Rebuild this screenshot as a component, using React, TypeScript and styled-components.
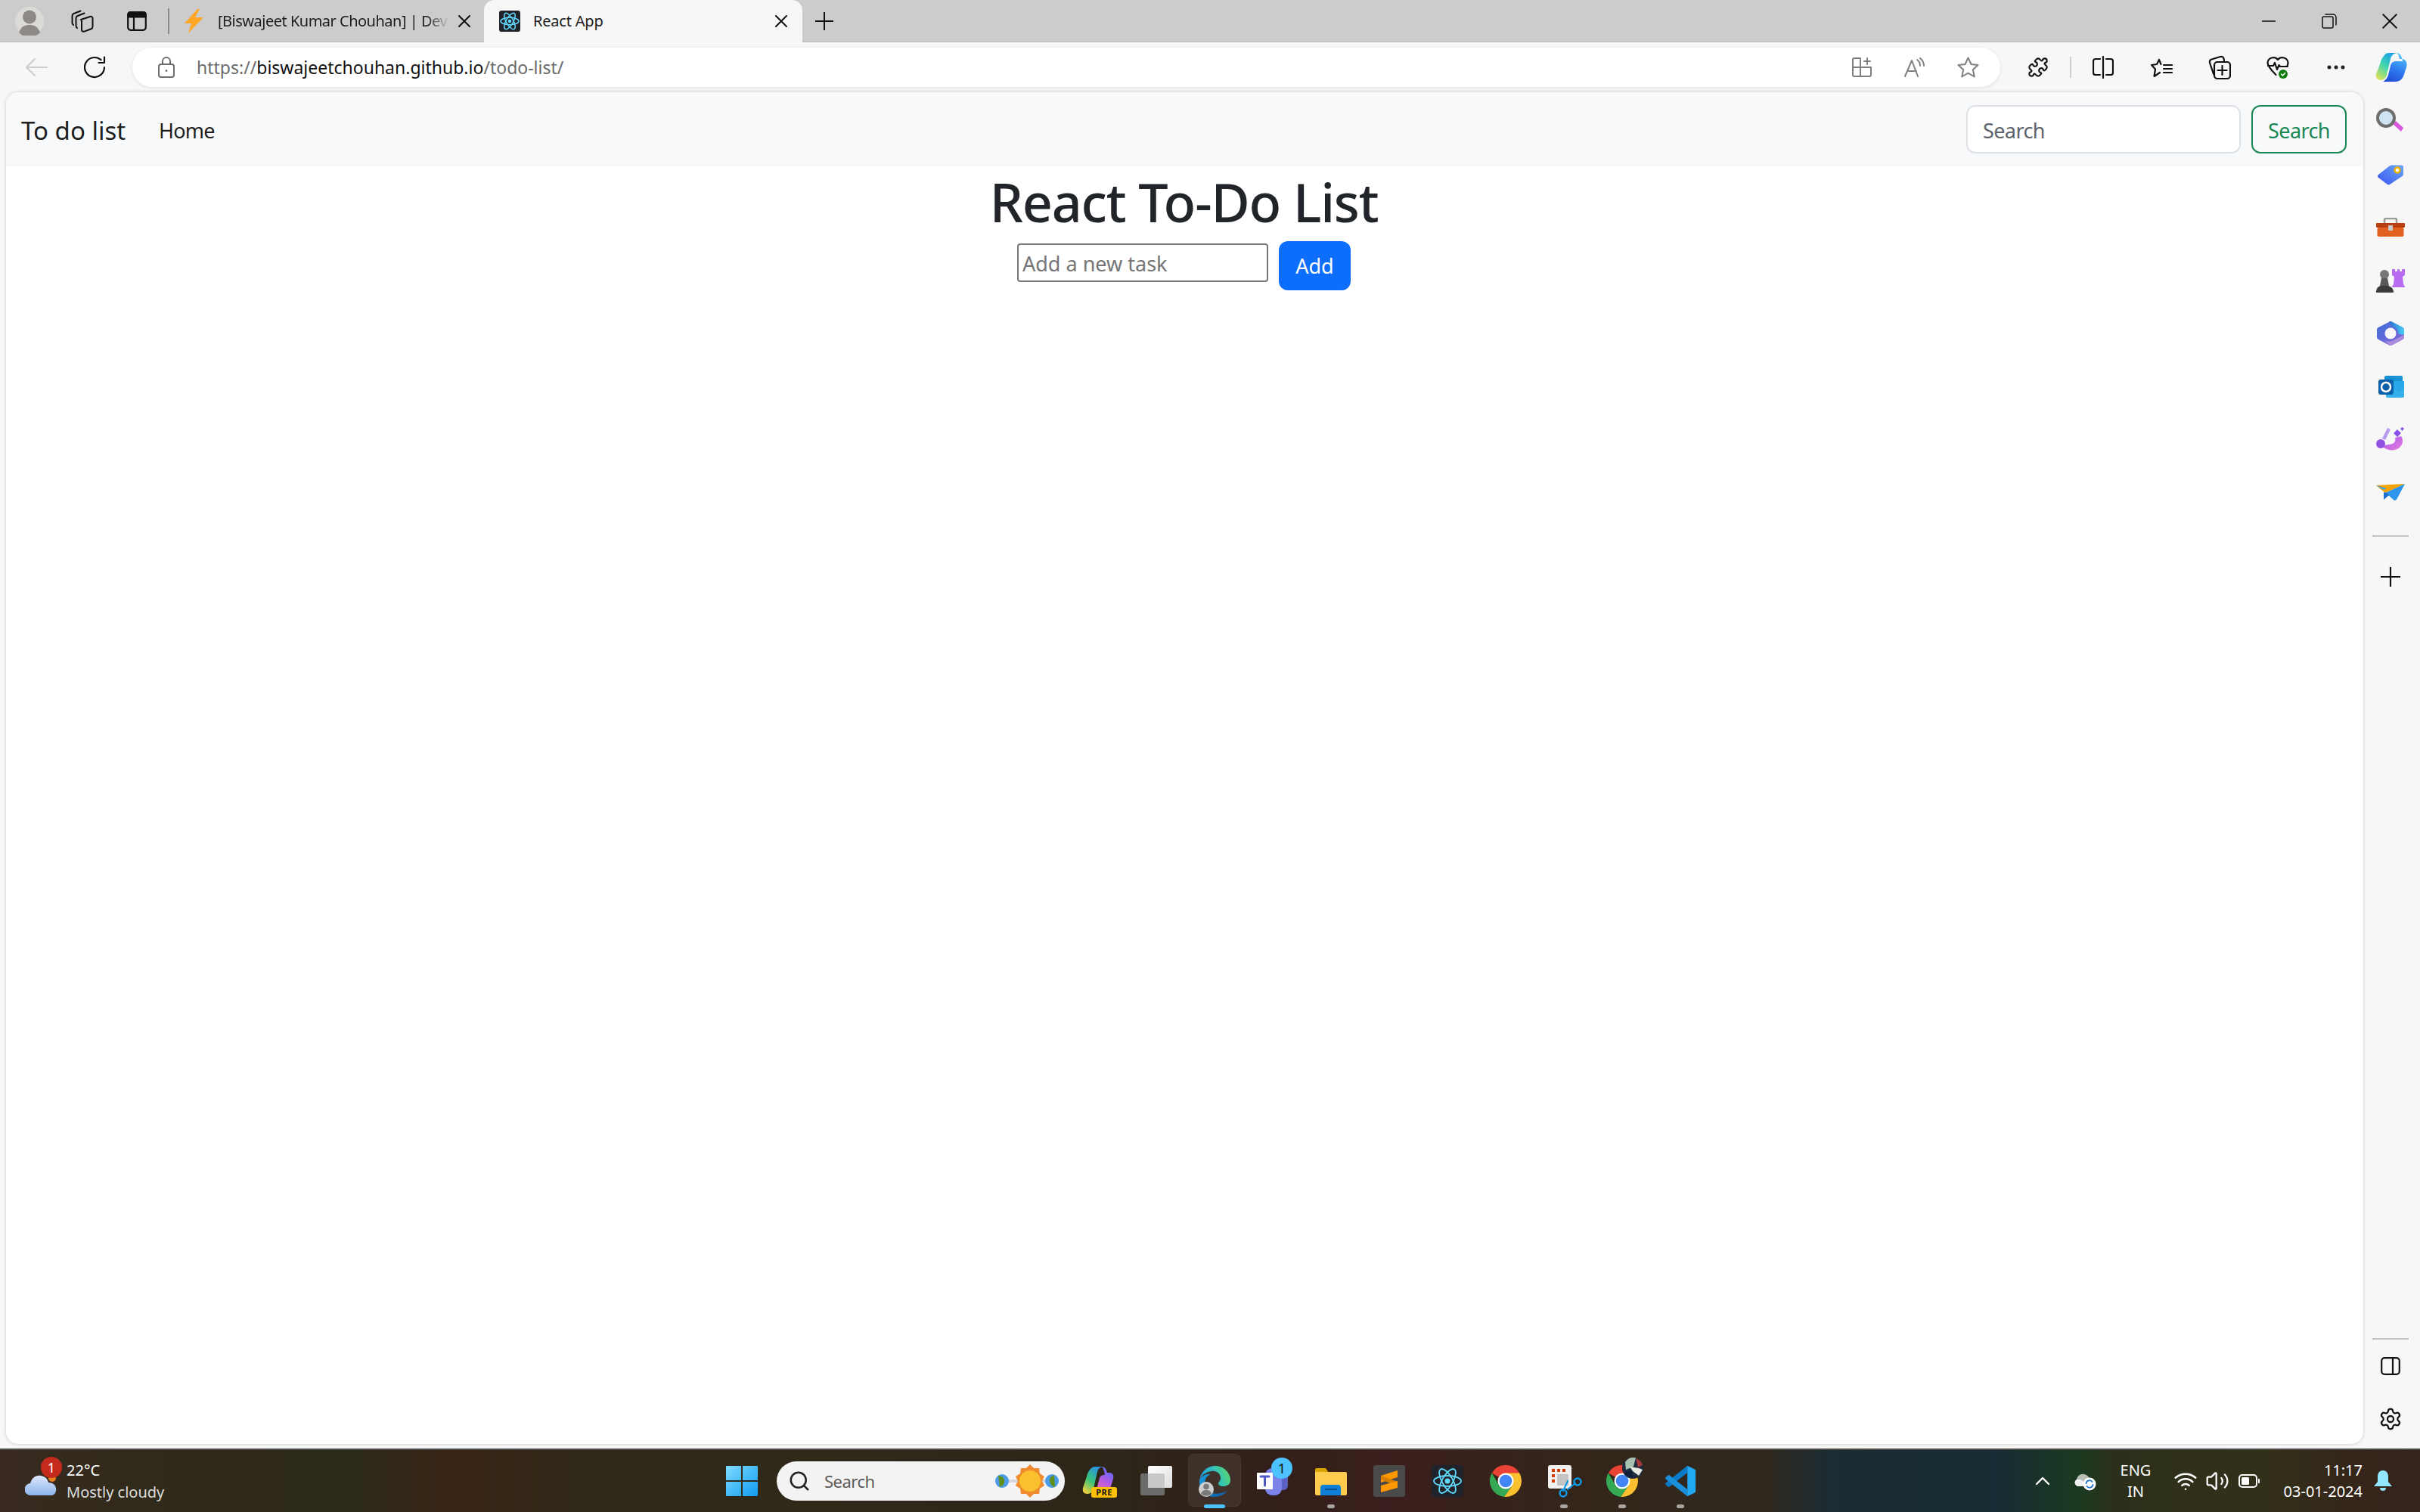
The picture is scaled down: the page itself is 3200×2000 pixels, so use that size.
import React from "react";
import styled, { createGlobalStyle } from "styled-components";
import { Puzzle, Settings, Search as SearchGlass, Wifi, Volume2 } from "lucide-react";

const FONT = `"Noto Sans", "Open Sans", sans-serif`;

const Global = createGlobalStyle`
  html, body { margin: 0; padding: 0; background: #f7f7f7; }
  #root { width: 3200px; height: 2000px; overflow: hidden; }
  * { box-sizing: border-box; }
  input::placeholder { opacity: 1; }
`;

const Screen = styled.div`
  width: 3200px; height: 2000px; display: flex; flex-direction: column;
  background: #f7f7f7; font-family: ${FONT}; color: #212529;
`;

/* ---------- tab strip ---------- */
const TabStrip = styled.div`
  height: 56px; flex: none; display: flex; align-items: center; background: #cccccc;
  box-shadow: inset 0 -2px 1px -1px #bdbdbd;
`;
const StripSlot = styled.div<{ $w: number }>`
  width: ${p => p.$w}px; height: 56px; flex: none; display: flex; align-items: center; justify-content: center;
`;
const StripDivider = styled.div`
  width: 2px; height: 34px; background: #8a8a8a; flex: none;
`;
const Tab = styled.div<{ $active?: boolean }>`
  height: 56px; flex: none; display: flex; align-items: center; position: relative;
  width: ${p => (p.$active ? 421 : 416)}px;
  padding-left: ${p => (p.$active ? 20 : 19)}px;
  background: ${p => (p.$active ? "#f7f7f7" : "transparent")};
  border-radius: ${p => (p.$active ? "14px 14px 0 0" : "0")};
`;
const TabLabel = styled.span<{ $fade?: boolean }>`
  font-size: 20px; line-height: 28px; white-space: nowrap; overflow: hidden; color: #1c1c1c;
  letter-spacing: ${p => (p.$fade ? -0.5 : -0.2)}px;
  margin-left: ${p => (p.$fade ? 18 : 17)}px;
  width: ${p => (p.$fade ? 306 : 290)}px;
  ${p => p.$fade && "mask-image: linear-gradient(90deg, #000 90%, transparent 100%);"}
`;
const TabClose = styled.span<{ $active?: boolean }>`
  margin-left: ${p => (p.$active ? 30 : 12)}px; display: flex; flex: none;
`;
const StripSpacer = styled.div`flex: 1;`;
const WinSlot = styled.div`
  width: 80px; height: 56px; flex: none; display: flex; align-items: center; justify-content: center;
`;

/* ---------- toolbar ---------- */
const Toolbar = styled.div`
  height: 66px; flex: none; display: flex; align-items: center; background: #f7f7f7; padding-left: 8px;
`;
const ToolSlot = styled.div<{ $w?: number; $shift?: number }>`
  width: ${p => p.$w ?? 77}px; height: 52px; flex: none; display: flex; align-items: center; justify-content: center;
  padding-left: ${p => p.$shift ?? 0}px;
`;
const Address = styled.div`
  width: 2470px; height: 52px; flex: none; margin-left: 10px; display: flex; align-items: center;
  background: #fff; border-radius: 26px; box-shadow: 0 1px 4px rgba(0,0,0,.1); padding: 0 8px 0 0;
`;
const LockSlot = styled.div`
  width: 85px; flex: none; display: flex; justify-content: center; padding-left: 5px;
`;
const Url = styled.div`
  flex: 1; font-size: 23px; line-height: 32px; color: #6a6a6a; white-space: nowrap; letter-spacing: 0;
  b { font-weight: 400; color: #111; }
`;
const ToolDivider = styled.div`
  width: 2px; height: 28px; background: #cfcfcf; margin: 0 3px 0 4px; flex: none;
`;

/* ---------- body ---------- */
const Middle = styled.div`
  flex: 1; min-height: 0; display: flex;
`;
const Page = styled.div`
  width: 3117px; margin-left: 8px; height: 1788px; flex: none; background: #fff; border-radius: 16px; overflow: hidden;
  box-shadow: 0 0 4px rgba(0,0,0,.2); display: flex; flex-direction: column;
`;
const Navbar = styled.nav`
  height: 98px; flex: none; background: #f8f9fa; display: flex; align-items: center; padding: 0 22px 0 20px;
`;
const Brand = styled.a`
  font-size: 33px; line-height: 60px; color: rgba(0,0,0,.9); width: 182px; white-space: nowrap; padding-top: 3px;
`;
const NavLink = styled.a`
  font-size: 27px; line-height: 48px; color: rgba(0,0,0,.9); flex: 1; letter-spacing: -0.8px; padding-top: 3px;
`;
const SearchField = styled.input`
  width: 363px; height: 64px; border: 2px solid #dee2e6; border-radius: 12px; background: #fff;
  font: 400 27px ${FONT}; letter-spacing: -0.6px; padding: 2px 20px 0; outline: none;
  &::placeholder { color: #5c636a; }
`;
const SearchButton = styled.button`
  width: 126px; height: 64px; margin-left: 14px; border: 2px solid #198754; border-radius: 12px; background: transparent;
  font: 400 27px ${FONT}; letter-spacing: -0.6px; color: #198754; padding: 2px 0 0;
`;
const Main = styled.main`
  display: flex; flex-direction: column; align-items: center; padding-right: 2px;
`;
const Title = styled.h1`
  margin: 0 0 3px; font-size: 70px; line-height: 94px; padding-bottom: 2px; font-weight: 500; color: #212529; letter-spacing: -1.2px;
`;
const TaskForm = styled.form`
  display: flex; align-items: flex-start; margin: 0;
`;
const TaskInput = styled.input`
  width: 332px; height: 51px; margin-top: 3px; border: 2px solid #767676; border-radius: 4px; background: #fff;
  font: 400 27px ${FONT}; padding: 2px 5px 0; outline: none;
  &::placeholder { color: #757575; }
`;
const AddButton = styled.button`
  width: 95px; height: 65px; margin-left: 14px; border: none; border-radius: 12px; background: #0d6efd; color: #fff;
  font: 400 27px ${FONT}; padding: 0;
`;

/* ---------- sidebar ---------- */
const Sidebar = styled.aside`
  width: 75px; flex: none; display: flex; flex-direction: column; align-items: center; padding: 4px 3px 0 0;
`;
const SideSlot = styled.div`
  width: 72px; height: 70px; flex: none; display: flex; align-items: center; justify-content: center;
`;
const SideRule = styled.div`
  width: 48px; height: 2px; background: #c4c4c4; flex: none;
`;
const SideTopRule = styled(SideRule)`margin: 22px 0 18px;`;
const SideBottom = styled.div`
  margin-top: auto; display: flex; flex-direction: column; align-items: center; padding-bottom: 4px;
`;

/* ---------- taskbar ---------- */
const Taskbar = styled.footer`
  height: 84px; flex: none; display: flex; align-items: center; color: #fff;
  border-top: 2px solid #4b4a46;
  background: linear-gradient(90deg, #392a21 0, #2f2a19 200px, #2e2a18 480px, #3a2517 600px, #2f2a18 800px, #30291a 1100px,
    #2c2619 1450px, #341f1a 1700px, #3a1f1d 1860px, #33261a 2120px, #2f2920 2340px, #1b2c32 2420px, #172c34 2640px,
    #1b3a20 2750px, #2c2f1a 2800px, #33301a 3000px, #35241a 3130px, #36251c 3200px);
`;
const WeatherGroup = styled.div`
  width: 942px; flex: none; display: flex; align-items: center; padding-left: 33px;
`;
const WeatherIcon = styled.div`
  position: relative; width: 55px; height: 82px; flex: none; display: flex; align-items: flex-end; padding-bottom: 22px;
`;
const AlertBadge = styled.span`
  position: absolute; left: 21px; top: 9px; width: 28px; height: 28px; border-radius: 50%; background: #c42b1c;
  color: #fff; font-size: 18px; line-height: 28px; text-align: center;
`;
const WeatherText = styled.div`
  display: flex; flex-direction: column; font-size: 20px; line-height: 29px;
`;
const WeatherSub = styled.span`color: #dcdcdc;`;
const Dock = styled.div`
  display: flex; align-items: center; flex: none;
`;
const DockSlot = styled.div<{ $active?: boolean; $dot?: "run" | "open" }>`
  width: 77px; height: 82px; flex: none; display: flex; align-items: center; justify-content: center; position: relative;
  ${p => p.$active && `
    &::before { content: ""; position: absolute; left: 3.5px; top: 5px; width: 70px; height: 70px; border-radius: 8px;
      background: rgba(255,255,255,.07); box-shadow: inset 0 0 0 1px rgba(255,255,255,.04); }
  `}
  ${p => p.$dot && `
    &::after { content: ""; position: absolute; bottom: 5px; left: 50%; transform: translateX(-50%); height: 5px; border-radius: 3px;
      width: ${p.$dot === "run" ? 28 : 10}px; background: ${p.$dot === "run" ? "#4cc2ff" : "#a9a5a0"}; }
  `}
  svg { position: relative; }
`;
const PreTag = styled.span`
  position: absolute; left: 30px; top: 49px; width: 34px; height: 14px; border-radius: 3px; background: #ffc107; color: #111;
  font-size: 11px; line-height: 14px; font-weight: 700; text-align: center; letter-spacing: 0.5px;
`;
const CountBadge = styled.span`
  position: absolute; left: 37px; top: 10px; width: 28px; height: 28px; border-radius: 50%; background: #4cc2ff; color: #111;
  font-size: 18px; line-height: 28px; text-align: center;
`;
const AvatarBubble = styled.span`
  position: absolute; left: 39px; top: 10px; display: flex;
`;
const TaskSearch = styled.div`
  width: 381px; height: 52px; flex: none; margin: 0 5px 0 8px; border-radius: 26px; background: #f3f3f3; display: flex; align-items: center;
  padding: 0 8px 0 15px; color: #5a5a5a;
`;
const TaskSearchLabel = styled.span`
  margin-left: 18px; flex: 1; font-size: 22px; letter-spacing: -0.5px;
`;
const Tray = styled.div`
  margin-left: auto; display: flex; align-items: center; padding-right: 22px; flex: none;
`;
const TraySlot = styled.div<{ $w: number }>`
  width: ${p => p.$w}px; height: 82px; flex: none; display: flex; align-items: center; justify-content: center; position: relative;
`;
const Lang = styled.div`
  width: 78px; flex: none; text-align: center; font-size: 20px; line-height: 28px; margin-right: 6px;
`;
const Clock = styled.div`
  width: 129px; flex: none; text-align: right; font-size: 20px; line-height: 28px; letter-spacing: 0; white-space: nowrap;
`;

/* ---------- drawings ---------- */
const Glyph = styled.svg<{ $ink?: string; $line?: number }>`
  display: block; flex: none; fill: none;
  stroke: ${p => p.$ink ?? "none"}; stroke-width: ${p => p.$line ?? 2.4}px; stroke-linecap: round; stroke-linejoin: round;
`;
const Lucide = styled.span<{ $ink: string }>`
  display: flex; color: ${p => p.$ink};
`;

const Avatar = () => (
  <Glyph width={38} height={38} viewBox="0 0 38 38">
    <circle cx="19" cy="19" r="19" fill="#dbdad6" />
    <circle cx="19" cy="13.5" r="9" fill="#8d8986" />
    <path d="M5 34c3-8 8-10 14-10s11 2 14 10a19 19 0 0 1-28 0z" fill="#8d8986" />
  </Glyph>
);
const Workspaces = () => (
  <Glyph width={30} height={30} viewBox="0 0 30 30" $ink="#111" $line={2}>
    <path d="M13 13l12-4c2-.6 3.500.4 3.500 2.300v11c0 1.500-.7 2.500-2 3l-9 3.300c-2 .6-3.500-.3-3.500-2.300V15c0-1 0-1.500-1-2z" />
    <path d="M8 24c-1-.5-1.500-1.500-1.500-3V11c0-1.500.8-2.500 2-3l9-3.500" />
    <path d="M3 20c-1-.5-1.500-1.500-1.500-3V8c0-1.500.8-2.500 2-3l9-3.500" />
  </Glyph>
);
const VerticalTabs = () => (
  <Glyph width={26} height={26} viewBox="0 0 26 26" $ink="#111" $line={2.2}>
    <rect x="1.200" y="1.200" width="23.600" height="23.600" rx="3.500" />
    <path d="M1.500 7.500V4a3 3 0 0 1 3-3h17a3 3 0 0 1 3 3v3.500z" fill="#111" />
    <path d="M9 8v17" />
  </Glyph>
);
const Bolt = () => (
  <Glyph width={27} height={32} viewBox="0 0 27 32">
    <path d="M18 0 1 19h9L6 32l20-21H15l6-11z" fill="#ffa726" />
  </Glyph>
);
const Atom = ({ size, bg, radius }: { size: number; bg: string; radius: number }) => (
  <Glyph width={size} height={size} viewBox="0 0 42 42">
    <rect width="42" height="42" rx={radius} fill={bg} />
    <g stroke="#61dafb" strokeWidth={size < 32 ? 2.2 : 1.800} fill="none">
      <ellipse cx="21" cy="21" rx="18" ry="7" />
      <ellipse cx="21" cy="21" rx="18" ry="7" transform="rotate(60 21 21)" />
      <ellipse cx="21" cy="21" rx="18" ry="7" transform="rotate(120 21 21)" />
    </g>
    <circle cx="21" cy="21" r="3.500" fill="#61dafb" />
  </Glyph>
);
const CloseX = ({ size = 16, line = 2 }: { size?: number; line?: number }) => (
  <Glyph width={size} height={size} viewBox="0 0 16 16" $ink="#111" $line={line}>
    <path d="M1 1l14 14M15 1 1 15" />
  </Glyph>
);
const PlusMark = ({ size = 24 }: { size?: number }) => (
  <Glyph width={size} height={size} viewBox="0 0 24 24" $ink="#111" $line={2}>
    <path d="M12 0v24M0 12h24" />
  </Glyph>
);
const MinMark = () => (
  <Glyph width={18} height={2} viewBox="0 0 18 2" $ink="#111" $line={1.500}><path d="M0 1h18" /></Glyph>
);
const RestoreMark = () => (
  <Glyph width={20} height={20} viewBox="0 0 20 20" $ink="#111" $line={1.500}>
    <rect x="1" y="4" width="14" height="15" rx="2" />
    <path d="M5 1h10a4 4 0 0 1 4 4v10" />
  </Glyph>
);
const BackArrow = () => (
  <Glyph width={30} height={26} viewBox="0 0 30 26" $ink="#cdcdcd" $line={2}>
    <path d="M29 13H2M13 2 2 13l11 11" />
  </Glyph>
);
const Refresh = () => (
  <Glyph width={30} height={30} viewBox="0 0 30 30" $ink="#111" $line={2.200}>
    <path d="M27 15A13 13 0 1 1 22.500 5.200" />
    <path d="M27 1.500V9h-7.500" />
  </Glyph>
);
const Lock = () => (
  <Glyph width={22} height={28} viewBox="0 0 22 28" $ink="#6f6f6f" $line={2}>
    <rect x="1" y="10" width="20" height="17" rx="3" />
    <path d="M6 10V6a5 5 0 0 1 10 0v4" />
    <circle cx="11" cy="18.500" r="1.300" fill="#555" stroke="none" />
  </Glyph>
);
const AppAdd = () => (
  <Glyph width={26} height={26} viewBox="0 0 26 26" $ink="#808080" $line={2}>
    <path d="M1 13V3a2 2 0 0 1 2-2h8v24H3a2 2 0 0 1-2-2zM11 13h14v10a2 2 0 0 1-2 2H11" />
    <path d="M1 13h10M20 1v8M16 5h8" />
  </Glyph>
);
const ReadAloud = () => (
  <Glyph width={28} height={26} viewBox="0 0 28 26" $ink="#808080" $line={2}>
    <path d="M1 25 10 4l8 21M4 18h12" />
    <path d="M17 3c3 2 4 5 4 8M21 1c3 2.500 5 6 5 10" />
  </Glyph>
);
const StarIcon = () => (
  <Glyph width={29} height={28} viewBox="0 0 29 28" $ink="#808080" $line={2}>
    <path d="M14.500 1.500 18.500 10l9 1-6.700 6.200 2 9.300-8.300-4.800-8.300 4.800 2-9.300L1.500 11l9-1z" />
  </Glyph>
);
const SplitScreen = () => (
  <Glyph width={28} height={30} viewBox="0 0 28 30" $ink="#111" $line={2.200}>
    <path d="M10 4H4a3 3 0 0 0-3 3v15a3 3 0 0 0 3 3h6M18 4h6a3 3 0 0 1 3 3v15a3 3 0 0 1-3 3h-6M14 1v28" />
  </Glyph>
);
const Favorites = () => (
  <Glyph width={30} height={28} viewBox="0 0 30 28" $ink="#111" $line={2.200}>
    <path d="M12 4 9 10l-7 1 5 5.500L5.500 26 13 21M12 4l2.500 6" />
    <path d="M18 11h11M18 16h11M18 21h11" />
  </Glyph>
);
const Collections = () => (
  <Glyph width={30} height={32} viewBox="0 0 30 32" $ink="#111" $line={2.200}>
    <path d="M7 25 2 10c-.4-2 .5-4 2.500-4.500L16 2c2-.5 4 .5 4.500 2.500L21 7" />
    <rect x="8" y="9" width="21" height="22" rx="4" fill="#f7f7f7" />
    <path d="M18.500 14v12M12.500 20h12" />
  </Glyph>
);
const Health = () => (
  <Glyph width={30} height={30} viewBox="0 0 30 30" $ink="#111" $line={2.200}>
    <path d="M15 5C11 0 2 2 1.500 9c0 5 6 11 11 16M15 5c4-5 13-3 13.500 4 0 1.500-.5 3-1 4" />
    <path d="M2 13h7l2-4 3 9 2.500-6 1.500 2h10" />
    <circle cx="22" cy="24" r="6" fill="#107c10" stroke="none" />
    <path d="M19.500 24l2 2 3-3.500" stroke="#fff" strokeWidth="1.500" />
  </Glyph>
);
const More = () => (
  <Glyph width={24} height={6} viewBox="0 0 24 6">
    <circle cx="3" cy="3" r="2.500" fill="#222" /><circle cx="12" cy="3" r="2.500" fill="#222" /><circle cx="21" cy="3" r="2.500" fill="#222" />
  </Glyph>
);
const CopilotMark = ({ id, width, height }: { id: string; width: number; height: number }) => (
  <Glyph width={width} height={height} viewBox="0 0 42 38">
    <defs>
      <linearGradient id={id + "a"} x1="0.8" y1="0" x2="0.2" y2="1">
        <stop offset="0" stopColor="#1a9bf0" /><stop offset=".5" stopColor="#3dd6b0" /><stop offset="1" stopColor="#d9e25a" />
      </linearGradient>
      <linearGradient id={id + "b"} x1="0.7" y1="0" x2="0.3" y2="1">
        <stop offset="0" stopColor="#53c6f7" /><stop offset=".55" stopColor="#2f7bf0" /><stop offset="1" stopColor="#1f4fd8" />
      </linearGradient>
    </defs>
    <path d="M12 3C13 1 15 0 18 0h10c-5 1-7 4-8 8l-5 21c-1 4-4 7-8 7-5 0-7-4-6-8L6 15c1-5 3-9 6-12z" fill={`url(#${id}a)`} />
    <path d="M28 0c4 0 6 3 7 7l1 4h-8c-5 0-7 2-8 6l-3 12c-1 4-3 7-7 9h17c5 0 8-3 10-7l4-12c2-6-1-11-6-11h-3l-1-4c-.5-2-2-4-4-4z" fill={`url(#${id}b)`} />
  </Glyph>
);

/* sidebar */
const Magnifier = () => (
  <Glyph width={38} height={36} viewBox="0 0 38 36">
    <path d="M22 21l4-4 10 9-3 5z" fill="#d65bdc" />
    <circle cx="13" cy="13" r="11" fill="#cfe4f2" stroke="#6e6e6e" strokeWidth="4" />
  </Glyph>
);
const TagIcon = () => (
  <Glyph width={36} height={28} viewBox="0 0 36 28">
    <defs><linearGradient id="tagG" x1="0" y1="1" x2="1" y2="0"><stop offset="0" stopColor="#3a55f0" /><stop offset="1" stopColor="#6ba8f5" /></linearGradient></defs>
    <path d="M2 14 16 3c1-1 2-1.500 3-1.500h14c1 0 2 1 2 2v10c0 1-.5 2-1.500 2.500L17 27c-1 .5-2 .5-3 0L2 18c-1.500-1-1.500-3 0-4z" fill="url(#tagG)" />
    <circle cx="27" cy="8" r="3.500" fill="#fff" stroke="#f0b400" strokeWidth="2.500" />
  </Glyph>
);
const Toolbox = () => (
  <Glyph width={40} height={26} viewBox="0 0 40 26">
    <path d="M12 8V3a2 2 0 0 1 2-2h12a2 2 0 0 1 2 2v5" stroke="#9a9a9a" strokeWidth="2.500" />
    <rect x="1" y="7" width="38" height="6" rx="1" fill="#b8400f" />
    <rect x="2.500" y="13" width="35" height="12" rx="2" fill="#e2601f" />
    <rect x="17" y="10" width="6" height="7" rx="1" fill="#c9c9c9" />
  </Glyph>
);
const Chess = () => (
  <Glyph width={40} height={32} viewBox="0 0 40 32">
    <circle cx="12" cy="8" r="6" fill="#777" />
    <path d="M8 13h8l2 10H6z" fill="#5a5a5a" /><path d="M1 32c0-5 2-8 6-9h10c4 1 7 4 7 9z" fill="#3a3a3a" />
    <path d="M22 1h4v3h3V1h3v3h3V1h4v8l-3 2 1 10 2 3v1H22v-1l2-3 1-10-3-2z" fill="#b86cf2" />
  </Glyph>
);
const M365 = () => (
  <Glyph width={36} height={34} viewBox="0 0 36 34">
    <defs>
      <linearGradient id="mA" x1="0" y1="0" x2="1" y2="1"><stop offset="0" stopColor="#3b6fd8" /><stop offset="1" stopColor="#8a66d9" /></linearGradient>
      <linearGradient id="mB" x1="0" y1="0" x2="1" y2="0"><stop offset="0" stopColor="#2f6fd0" /><stop offset="1" stopColor="#45d0f5" /></linearGradient>
    </defs>
    <path d="M18 1 34 9c1 .5 2 1.500 2 3v10c0 1.500-1 2.500-2 3l-14 7.500c-1.500.6-2.500.6-4 0L2 25c-1-.5-2-1.500-2-3V12c0-1.500 1-2.500 2-3z" fill="url(#mA)" />
    <path d="M16 1.500c1.500-.7 2.500-.7 4 0L34 9c1 .5 2 1.500 2 3v7l-8-1.500c.5-5-3-9-8-9.500z" fill="url(#mB)" />
    <path d="M10 26c4 2 8 2 11 .5l15-7.500v3c0 1.500-1 2.500-2 3l-14 7.500c-1.500.6-2.500.6-4 0z" fill="#a98be0" />
    <circle cx="18" cy="17" r="7.500" fill="#f7f7f7" />
  </Glyph>
);
const Outlook = () => (
  <Glyph width={36} height={30} viewBox="0 0 36 30">
    <rect x="10" y="1" width="24" height="24" rx="2" fill="#1593d6" />
    <path d="M12 14h24v14a2 2 0 0 1-2 2H14a2 2 0 0 1-2-2z" fill="#36b0ea" />
    <path d="M22 8h14v10l-7 5-7-5z" fill="#28a8e8" />
    <rect x="2" y="6" width="20" height="20" rx="3" fill="#0c5fa8" />
    <circle cx="12" cy="16" r="6" fill="none" stroke="#fff" strokeWidth="2.500" />
  </Glyph>
);
const Designer = () => (
  <Glyph width={40} height={32} viewBox="0 0 40 32">
    <defs><linearGradient id="dG" x1="0" y1="0" x2="1" y2="1"><stop offset="0" stopColor="#a45af0" /><stop offset="1" stopColor="#ea7bdc" /></linearGradient></defs>
    <path d="M16 1 9 15l4 2L20 3z" fill="#b69af0" /><circle cx="7" cy="22" r="6" fill="#9050e0" />
    <path d="M10 26c6 6 20 7 25-3 2-4 1-8-1-11l-8 2c2 6-3 9-8 9-3 0-6 1-8 3z" fill="url(#dG)" />
    <path d="M24 8l5-5 5 5-5 5zM33 2l2.500-2L38 2l-2.500 3z" fill="#8a4fe8" />
  </Glyph>
);
const SendIcon = () => (
  <Glyph width={38} height={24} viewBox="0 0 38 24">
    <path d="M0 3 38 1 12 13z" fill="#f3a200" /><path d="M0 3l10 6 4-2z" fill="#3aa8f0" />
    <path d="M38 1 12 13l3 2 9 8c2 0 3-1 4-3z" fill="#2f95ec" /><path d="M10 12l4 1 3 3-7 6z" fill="#1a6fc9" />
  </Glyph>
);
const PanelIcon = () => (
  <Glyph width={26} height={24} viewBox="0 0 26 24" $ink="#111" $line={2.200}>
    <rect x="1.200" y="1.200" width="23.600" height="21.600" rx="4" /><path d="M16 1.500v21" />
  </Glyph>
);

/* taskbar */
const WindowsLogo = () => (
  <Glyph width={42} height={42} viewBox="0 0 42 42">
    <defs><linearGradient id="wG" x1="0" y1="0" x2="1" y2="1"><stop offset="0" stopColor="#7fdcff" /><stop offset="1" stopColor="#0f9bf0" /></linearGradient></defs>
    <path d="M1 1h19v19H0V2a1 1 0 0 1 1-1zM22 1h19a1 1 0 0 1 1 1v18H22zM0 22h20v19H1a1 1 0 0 1-1-1zM22 22h20v18a1 1 0 0 1-1 1H22z" fill="url(#wG)" />
  </Glyph>
);
const SearchDeco = () => (
  <Glyph width={84} height={46} viewBox="0 0 84 46">
    <path d="M16 23h52" stroke="#d7d5dd" strokeWidth="4" strokeDasharray="3 3" />
    <circle cx="9" cy="23" r="9" fill="#4c9be8" /><path d="M4 16c4 0 7 2 8 6s-2 8-6 9z" fill="#5f8f1c" />
    <circle cx="75" cy="23" r="9" fill="#4c9be8" /><path d="M78 15c-4 2-7 4-6 8s3 8 7 8z" fill="#5f8f1c" />
    <path d="M46 1l5 5 7 0 1 7 6 4-3 6 3 6-6 4-1 7-7 0-5 5-5-5-7 0-1-7-6-4 3-6-3-6 6-4 1-7 7 0z" fill="#ef8a2d" />
    <circle cx="46" cy="23" r="14" fill="#fbc02d" />
  </Glyph>
);
const CopilotDock = () => (
  <Glyph width={42} height={38} viewBox="0 0 42 38">
    <defs>
      <linearGradient id="cdA" x1="0.8" y1="0" x2="0.2" y2="1"><stop offset="0" stopColor="#2a8cf0" /><stop offset=".55" stopColor="#37c47a" /><stop offset="1" stopColor="#f0d23c" /></linearGradient>
      <linearGradient id="cdB" x1="0.8" y1="0" x2="0.3" y2="1"><stop offset="0" stopColor="#4c6df0" /><stop offset=".5" stopColor="#b05be8" /><stop offset="1" stopColor="#f06aa0" /></linearGradient>
    </defs>
    <path d="M12 2c1-1 3-2 5-2h10c-4 1-6 3-7 7l-5 22c-1 4-4 7-8 7-5 0-7-3-6-8L6 13c1-5 3-8 6-11z" fill="url(#cdA)" />
    <path d="M26 0c3 0 5 2 6 5l1 3h4c4 1 5 4 4 8l-4 13c-1 4-4 6-8 6H13c4-2 6-5 7-9l3-11c1-3 3-4 6-4h1c-1-5-2-9-4-11z" fill="url(#cdB)" />
  </Glyph>
);
const TaskView = () => (
  <Glyph width={42} height={40} viewBox="0 0 42 40">
    <defs><linearGradient id="tvG" x1="0" y1="0" x2="1" y2="1"><stop offset="0" stopColor="#fff" /><stop offset="1" stopColor="#dedede" /></linearGradient></defs>
    <rect x="0" y="10" width="32" height="29" rx="2" fill="#6b6b6b" />
    <rect x="10" y="0" width="32" height="29" rx="2" fill="url(#tvG)" />
    <rect x="10" y="10" width="22" height="19" rx="2" fill="#c8c8c8" />
  </Glyph>
);
const EdgeIcon = () => (
  <Glyph width={42} height={42} viewBox="0 0 42 42">
    <defs>
      <linearGradient id="eA" x1="0" y1="0.6" x2="1" y2="0.3"><stop offset="0" stopColor="#1b9de2" /><stop offset=".6" stopColor="#36c3b0" /><stop offset="1" stopColor="#5cd96a" /></linearGradient>
      <linearGradient id="eB" x1="0" y1="0" x2="1" y2="1"><stop offset="0" stopColor="#1a9fe0" /><stop offset="1" stopColor="#0c59a4" /></linearGradient>
    </defs>
    <path d="M1 20C3 8 12 1 22 1c12 0 20 10 20 19 0 6-5 8-10 8-4 0-6-2-6-4 1-3 3-3 3-7 0-6-6-10-12-9C9 9 3 14 1 20z" fill="url(#eA)" />
    <path d="M1 20c3-6 9-9 15-8-6 2-9 8-7 15 2 9 12 15 29 7-4 5-10 8-18 8C9 42 0 32 1 20z" fill="url(#eB)" />
    <circle cx="10" cy="32" r="10" fill="#cfcfcf" />
    <circle cx="10" cy="28.500" r="3.800" fill="#7a7a7a" /><path d="M3 38c1-4 4-5 7-5s6 1 7 5a10 10 0 0 1-14 0z" fill="#7a7a7a" />
  </Glyph>
);
const TeamsIcon = () => (
  <Glyph width={42} height={40} viewBox="0 0 42 40">
    <rect x="24" y="6" width="17" height="26" rx="6" fill="#5a62c4" />
    <rect x="11" y="3" width="22" height="36" rx="9" fill="#7b83eb" />
    <rect x="0" y="9" width="21" height="22" rx="1" fill="#fff" />
    <path d="M5 14h11M10.500 14v12" stroke="#5059c9" strokeWidth="3" />
  </Glyph>
);
const FolderIcon = () => (
  <Glyph width={42} height={38} viewBox="0 0 42 38">
    <path d="M0 4a2 2 0 0 1 2-2h12l4 6H0z" fill="#d9a300" />
    <path d="M0 7h40a2 2 0 0 1 2 2v27a2 2 0 0 1-2 2H2a2 2 0 0 1-2-2z" fill="#fdcb4e" />
    <path d="M7 38v-10a4 4 0 0 1 4-4h19a4 4 0 0 1 4 4v10z" fill="#0f80d7" />
    <path d="M14 30h14" stroke="#0a4f8f" strokeWidth="2" />
  </Glyph>
);
const SublimeIcon = () => (
  <Glyph width={42} height={42} viewBox="0 0 42 42">
    <rect width="42" height="42" rx="3" fill="#4a4a4a" />
    <path d="M32 7v9L10 23v-9z" fill="#ff9800" /><path d="M10 19v-5l22 8v6z" fill="#d97f00" /><path d="M32 21v9L10 36v-9z" fill="#ff9800" />
  </Glyph>
);
const ChromeIcon = () => (
  <Glyph width={42} height={42} viewBox="0 0 48 48">
    <path d="M3.200 12A24 24 0 0 1 44.800 12L24 24z" fill="#ea4335" />
    <path d="M3.200 12A24 24 0 0 0 22 47.900L34.400 30H13.600z" fill="#34a853" />
    <path d="M44.800 12H24l10.400 18L22 47.900A24 24 0 0 0 44.800 12z" fill="#fbc02d" />
    <circle cx="24" cy="24" r="12" fill="#fff" /><circle cx="24" cy="24" r="9.500" fill="#4285f4" />
  </Glyph>
);
const SnipIcon = () => (
  <Glyph width={42} height={42} viewBox="0 0 42 42" style={{ overflow: "visible" }}>
    <rect width="31" height="31" rx="3" fill="#f0f0f0" />
    <path d="M5 5h4v4H5zM12 5h4v4h-4zM19 5h4v4h-4zM5 12h4v4H5zM5 19h4v4H5z" fill="#d83b01" />
    <path d="M12 12h15v15H12z" fill="#c4c4c4" />
    <path d="M26 21 20 34M26 32 36 24" stroke="#0f9be8" strokeWidth="2.200" />
    <circle cx="20" cy="37" r="4.500" stroke="#0f9be8" strokeWidth="2.400" />
    <circle cx="39" cy="22" r="4.500" stroke="#0f9be8" strokeWidth="2.400" />
  </Glyph>
);
const PhotoBubble = () => (
  <Glyph width={28} height={28} viewBox="0 0 28 28">
    <circle cx="14" cy="14" r="14" fill="#1d2b3f" />
    <path d="M4 6a14 14 0 0 1 14-6l-3 12-10 4z" fill="#a8c0b0" />
    <path d="M18 1a14 14 0 0 1 9 9l-6 3z" fill="#a83838" />
    <path d="M10 12l12 2 5 2-5 8-8-6z" fill="#e8e8e0" />
    <path d="M3 20l10-3 1 10a14 14 0 0 1-11-7z" fill="#0f1f38" />
  </Glyph>
);
const VSCode = () => (
  <Glyph width={42} height={42} viewBox="0 0 100 100">
    <path d="M72 2v22L16 68a4 4 0 0 1-5 0l-7-6a4 4 0 0 1 0-6z" fill="#0a7ac6" />
    <path d="M72 98V76L16 32a4 4 0 0 0-5 0l-7 6a4 4 0 0 0 0 6z" fill="#1c8fdc" />
    <path d="M72 2l23 11a5 5 0 0 1 3 5v64a5 5 0 0 1-3 5L72 98z" fill="#23a9f2" />
  </Glyph>
);
const Chevron = () => (
  <Glyph width={20} height={12} viewBox="0 0 20 12" $ink="#fff" $line={2.400}><path d="M2 10l8-8 8 8" /></Glyph>
);
const CloudSync = () => (
  <Glyph width={30} height={26} viewBox="0 0 30 26">
    <path d="M5 20a5 5 0 0 1-1-9c1-5 5-8 10-7 3 .5 6 3 7 6v10z" fill="#b7bdb3" />
    <path d="M5 20a5 5 0 0 1-1-9c3-1 7 0 9 3v6z" fill="#f1f1f1" />
    <circle cx="21" cy="17" r="8.500" fill="#fff" />
    <path d="M16.500 16a4.500 4.500 0 0 1 8-2M25.500 18a4.500 4.500 0 0 1-8 2" stroke="#1f76d2" strokeWidth="1.800" />
  </Glyph>
);
const Battery = () => (
  <Glyph width={28} height={18} viewBox="0 0 28 18">
    <rect x="1" y="1" width="23" height="16" rx="4" stroke="#fff" strokeWidth="2" />
    <rect x="4" y="4" width="10" height="10" rx="1.500" fill="#fff" />
    <path d="M26 6a3 3 0 0 1 0 6z" fill="#fff" />
  </Glyph>
);
const Bell = () => (
  <Glyph width={24} height={28} viewBox="0 0 24 28">
    <path d="M12 0c5 0 7 4 7 8v7l5 6H0l5-6V8c0-4 2-8 7-8z" fill="#93e6ff" />
    <path d="M8 23h8c0 3-2 4-4 4s-4-1-4-4z" fill="#93e6ff" />
  </Glyph>
);
const Weather = () => (
  <Glyph width={44} height={28} viewBox="0 0 44 28">
    <defs><linearGradient id="cl" x1="0" y1="0" x2="0" y2="1"><stop offset="0" stopColor="#dce8fb" /><stop offset="1" stopColor="#8eb3ec" /></linearGradient></defs>
    <circle cx="36" cy="5" r="5" fill="#e8821e" />
    <path d="M8 28a8 8 0 0 1-1-16C9 5 14 1 21 2c6 1 9 4 10 9 8 0 11 6 10 11-1 4-3 6-7 6z" fill="url(#cl)" />
  </Glyph>
);

export default function App() {
  return (
    <Screen>
      <Global />
      <TabStrip>
        <StripSlot $w={78}><Avatar /></StripSlot>
        <StripSlot $w={61}><Workspaces /></StripSlot>
        <StripSlot $w={83}><VerticalTabs /></StripSlot>
        <StripDivider />
        <Tab>
          <Bolt />
          <TabLabel $fade>[Biswajeet Kumar Chouhan] | Dev</TabLabel>
          <TabClose><CloseX /></TabClose>
        </Tab>
        <Tab $active>
          <Atom size={28} bg="#20232a" radius={5} />
          <TabLabel>React App</TabLabel>
          <TabClose $active><CloseX /></TabClose>
        </Tab>
        <StripSlot $w={58}><PlusMark /></StripSlot>
        <StripSpacer />
        <WinSlot><MinMark /></WinSlot>
        <WinSlot><RestoreMark /></WinSlot>
        <WinSlot><CloseX size={20} line={1.500} /></WinSlot>
      </TabStrip>

      <Toolbar>
        <ToolSlot $w={79}><BackArrow /></ToolSlot>
        <ToolSlot $w={78}><Refresh /></ToolSlot>
        <Address>
          <LockSlot><Lock /></LockSlot>
          <Url>https://<b>biswajeetchouhan.github.io</b>/todo-list/</Url>
          <ToolSlot $w={70}><AppAdd /></ToolSlot>
          <ToolSlot $w={70}><ReadAloud /></ToolSlot>
          <ToolSlot $w={70}><StarIcon /></ToolSlot>
        </Address>
        <ToolSlot $w={88} $shift={12}><Lucide $ink="#111"><Puzzle size={28} strokeWidth={1.800} /></Lucide></ToolSlot>
        <ToolDivider />
        <ToolSlot><SplitScreen /></ToolSlot>
        <ToolSlot><Favorites /></ToolSlot>
        <ToolSlot><Collections /></ToolSlot>
        <ToolSlot><Health /></ToolSlot>
        <ToolSlot><More /></ToolSlot>
        <ToolSlot $w={69}><CopilotMark id="cop" width={42} height={38} /></ToolSlot>
      </Toolbar>

      <Middle>
        <Page>
          <Navbar>
            <Brand>To do list</Brand>
            <NavLink>Home</NavLink>
            <SearchField placeholder="Search" />
            <SearchButton type="button">Search</SearchButton>
          </Navbar>
          <Main>
            <Title>React To-Do List</Title>
            <TaskForm>
              <TaskInput placeholder="Add a new task" />
              <AddButton type="button">Add</AddButton>
            </TaskForm>
          </Main>
        </Page>
        <Sidebar>
          <SideSlot><Magnifier /></SideSlot>
          <SideSlot><TagIcon /></SideSlot>
          <SideSlot><Toolbox /></SideSlot>
          <SideSlot><Chess /></SideSlot>
          <SideSlot><M365 /></SideSlot>
          <SideSlot><Outlook /></SideSlot>
          <SideSlot><Designer /></SideSlot>
          <SideSlot><SendIcon /></SideSlot>
          <SideTopRule />
          <SideSlot><PlusMark size={26} /></SideSlot>
          <SideBottom>
            <SideRule />
            <SideSlot><PanelIcon /></SideSlot>
            <SideSlot><Lucide $ink="#111"><Settings size={32} strokeWidth={1.700} /></Lucide></SideSlot>
          </SideBottom>
        </Sidebar>
      </Middle>

      <Taskbar>
        <WeatherGroup>
          <WeatherIcon>
            <Weather />
            <AlertBadge>1</AlertBadge>
          </WeatherIcon>
          <WeatherText><span>22°C</span><WeatherSub>Mostly cloudy</WeatherSub></WeatherText>
        </WeatherGroup>
        <Dock>
          <DockSlot><WindowsLogo /></DockSlot>
          <TaskSearch>
            <Lucide $ink="#222"><SearchGlass size={30} strokeWidth={2} /></Lucide>
            <TaskSearchLabel>Search</TaskSearchLabel>
            <SearchDeco />
          </TaskSearch>
          <DockSlot><CopilotDock /><PreTag>PRE</PreTag></DockSlot>
          <DockSlot><TaskView /></DockSlot>
          <DockSlot $active $dot="run"><EdgeIcon /></DockSlot>
          <DockSlot><TeamsIcon /><CountBadge>1</CountBadge></DockSlot>
          <DockSlot $dot="open"><FolderIcon /></DockSlot>
          <DockSlot><SublimeIcon /></DockSlot>
          <DockSlot><Atom size={42} bg="#20232a" radius={4} /></DockSlot>
          <DockSlot><ChromeIcon /></DockSlot>
          <DockSlot $dot="open"><SnipIcon /></DockSlot>
          <DockSlot $dot="open"><ChromeIcon /><AvatarBubble><PhotoBubble /></AvatarBubble></DockSlot>
          <DockSlot $dot="open"><VSCode /></DockSlot>
        </Dock>
        <Tray>
          <TraySlot $w={56}><Chevron /></TraySlot>
          <TraySlot $w={56}><CloudSync /></TraySlot>
          <Lang>ENG<br />IN</Lang>
          <TraySlot $w={42}><Lucide $ink="#fff"><Wifi size={32} strokeWidth={1.900} /></Lucide></TraySlot>
          <TraySlot $w={42}><Lucide $ink="#fff"><Volume2 size={32} strokeWidth={1.700} /></Lucide></TraySlot>
          <TraySlot $w={42}><Battery /></TraySlot>
          <Clock>11:17<br />03-01-2024</Clock>
          <TraySlot $w={54}><Bell /></TraySlot>
        </Tray>
      </Taskbar>
    </Screen>
  );
}
